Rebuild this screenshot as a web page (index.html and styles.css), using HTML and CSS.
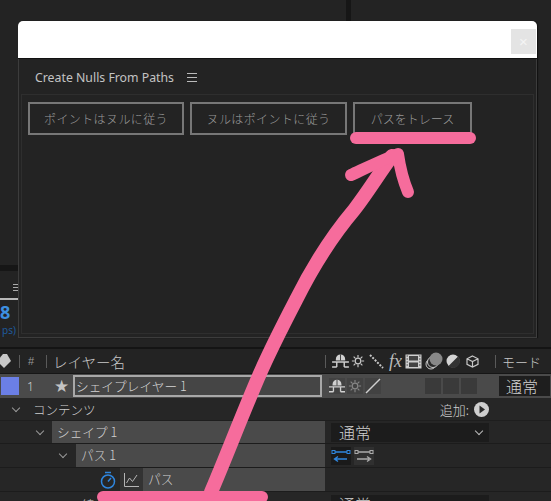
FILE: index.html
```html
<!DOCTYPE html>
<html lang="ja">
<head>
<meta charset="utf-8">
<title>Create Nulls From Paths</title>
<link rel="stylesheet" href="styles.css">
</head>
<body>
<div class="app">
  <svg width="0" height="0" class="defs">
    <symbol id="shy" viewBox="0 0 18 15">
      <path d="M4 7V5.500a5 5 0 0 1 10 0V7z" fill="currentColor"/>
      <path d="M0 8.500h18M0 14h5M13 14h5M5 9v5M13 9v5" stroke="currentColor" stroke-width="1.500" fill="none"/>
      <path d="M9 .5V7" stroke="#3a3a3a" stroke-width="1"/>
    </symbol>
    <symbol id="sun" viewBox="0 0 16 16">
      <circle cx="8" cy="8" r="3.200" fill="none" stroke="currentColor" stroke-width="1.400"/>
      <path d="M8 1v3M8 12v3M1 8h3M12 8h3M3 3l2 2M11 11l2 2M13 3l-2 2M5 11l-2 2" stroke="currentColor" stroke-width="1.300"/>
    </symbol>
  </svg>

  <section class="top-area">
    <div class="divider-v"></div>
    <div class="side-strip">
      <span class="side-menu"></span>
      <span class="side-time">8</span>
      <span class="side-fps">ps)</span>
    </div>
  </section>

  <section class="timeline">
    <div class="head-row">
      <svg class="tag" viewBox="0 0 14 16" width="14" height="16"><path d="M0 8 6 1h4l4 7-7 7z" fill="#c8c8c8"/></svg>
      <span class="sep sep-a"></span>
      <span class="hash">#</span>
      <span class="sep sep-b"></span>
      <span class="head-name">レイヤー名</span>
      <div class="head-icons">
        <span class="sep"></span>
        <svg class="ic-shy"><use href="#shy"/></svg>
        <svg class="ic-sun"><use href="#sun"/></svg>
        <svg class="ic-dots" viewBox="0 0 15 15" width="15" height="15"><path d="M1 1l13 13" stroke="#c8c8c8" stroke-width="2" stroke-dasharray="2 1.400"/></svg>
        <span class="fx">fx</span>
        <svg class="ic-film" viewBox="0 0 17 15" width="17" height="15"><rect x=".5" y=".5" width="16" height="14" fill="#cfcfcf"/><rect x="4" y="2" width="9" height="4.500" fill="#444"/><rect x="4" y="8.500" width="9" height="4.500" fill="#444"/><path d="M1.500 2h1.500M1.500 5h1.500M1.500 8h1.500M1.500 11h1.500M14 2h1.500M14 5h1.500M14 8h1.500M14 11h1.500" stroke="#444"/></svg>
        <svg class="ic-circles" viewBox="0 0 18 18" width="18" height="18"><circle cx="6" cy="12" r="5" fill="none" stroke="#c8c8c8"/><circle cx="8" cy="10" r="5.500" fill="#2a2a2a" stroke="#c8c8c8"/><circle cx="11" cy="7" r="6.500" fill="#888"/></svg>
        <svg class="ic-half" viewBox="0 0 14 14" width="14" height="14"><circle cx="7" cy="7" r="6.500" fill="#d4d4d4"/><path d="M12 2.500A6.500 6.500 0 0 1 2.500 12z" fill="#333"/></svg>
        <svg class="ic-cube" viewBox="0 0 13 13" width="13" height="13"><path d="M6.500 1 12 3.800v5.600L6.500 12 1 9.400V3.800zM1 3.800l5.500 2.700L12 3.800M6.500 6.500V12" fill="none" stroke="#c8c8c8" stroke-width="1.200"/></svg>
        <span class="sep sep-c"></span>
        <span class="head-mode">モード</span>
      </div>
    </div>

    <div class="row layer-row">
      <span class="swatch"></span>
      <span class="num">1</span>
      <span class="star">★</span>
      <span class="layer-name">シェイプレイヤー 1</span>
      <div class="switches">
        <span class="sw"><svg class="ic-shy"><use href="#shy"/></svg></span>
        <span class="sw dim"><svg class="ic-sun"><use href="#sun"/></svg></span>
        <span class="sw"><svg viewBox="0 0 16 16" width="16" height="16"><path d="M1 15 15 1" stroke="#cfcfcf" stroke-width="1.500"/></svg></span>
        <span class="gap"></span>
        <span class="sw blank"></span>
        <span class="sw blank"></span>
        <span class="sw blank"></span>
      </div>
      <span class="mode-box">通常</span>
    </div>

    <div class="row content-row">
      <span class="chev chev-1"></span>
      <span class="label">コンテンツ</span>
      <span class="add">追加:</span>
      <svg class="play" viewBox="0 0 15 15" width="15" height="15"><circle cx="7.500" cy="7.500" r="7.500" fill="#cfcfcf"/><path d="M5.500 3.500 11 7.500l-5.500 4z" fill="#2b2b2b"/></svg>
    </div>

    <div class="row shape-row">
      <span class="chev chev-2"></span>
      <span class="bar bar-shape">シェイプ 1</span>
      <span class="select">通常<i class="select-chev"></i></span>
    </div>

    <div class="row path-row">
      <span class="chev chev-3"></span>
      <span class="bar bar-path">パス 1</span>
      <div class="dirs">
        <svg class="dir on" viewBox="0 0 20 18" width="20" height="18"><path d="M4 5h12M16 12H4M7 9.500 3.500 12 7 14.500" stroke="#2f86de" stroke-width="1.400" fill="none"/><rect x="1" y="3.500" width="3" height="3" fill="none" stroke="#2f86de"/><rect x="16" y="3.500" width="3" height="3" fill="none" stroke="#2f86de"/></svg>
        <svg class="dir" viewBox="0 0 20 18" width="20" height="18"><path d="M4 5h12M3 12h12M13 9.500l3.500 2.500-3.500 2.500" stroke="#aaa" stroke-width="1.400" fill="none"/><rect x="1" y="3.500" width="3" height="3" fill="none" stroke="#aaa"/><rect x="16" y="3.500" width="3" height="3" fill="none" stroke="#aaa"/></svg>
      </div>
    </div>

    <div class="row prop-row">
      <svg class="watch" viewBox="0 0 16 18" width="16" height="18"><circle cx="8" cy="10.500" r="6.500" fill="none" stroke="#2f86de" stroke-width="1.500"/><path d="M5 1.500h6M8 10.500l3-3.500" stroke="#2f86de" stroke-width="1.500"/></svg>
      <span class="graph-cell"><svg viewBox="0 0 15 14" width="15" height="14"><path d="M.5 0v13.500H15M2.500 10l3-5 3 3.500L13 2" stroke="#b5b5b5" fill="none"/></svg></span>
      <span class="bar bar-prop">パス</span>
    </div>

    <div class="row stroke-row">
      <span class="label label-stroke">線</span>
      <span class="select select-last">通常</span>
    </div>
  </section>

  <div class="dialog">
    <header class="dialog-title">
      <button class="close" type="button">×</button>
    </header>
    <div class="dialog-body">
      <div class="panel-tab">
        <span>Create Nulls From Paths</span>
        <span class="burger"></span>
      </div>
      <div class="panel">
        <button class="btn btn-1" type="button">ポイントはヌルに従う</button>
        <button class="btn btn-2" type="button">ヌルはポイントに従う</button>
        <button class="btn btn-3" type="button">パスをトレース</button>
      </div>
    </div>
  </div>

  <svg class="scribble" viewBox="0 0 551 501" width="551" height="501">
    <g fill="none" stroke="#f66c9c" stroke-linecap="round" stroke-linejoin="round">
      <path d="M356 138H470" stroke-width="12"/>
      <path d="M103 497H262" stroke-width="12"/>
      <path d="M211 492C224 462 240 420 258 378C270 350 283 325 296 300C312 268 332 236 354 210C368 192 380 172 392 156" stroke-width="14"/>
      <path d="M351 175C366 168 382 160 398 154C400 168 403 180 408 192" stroke-width="12"/>
    </g>
  </svg>
</div>
</body>
</html>
```

FILE: styles.css
```css
* { box-sizing: border-box; }
html, body { margin: 0; padding: 0; }
body {
  width: 551px;
  height: 501px;
  overflow: hidden;
  background: #232323;
  font-family: "Noto Sans CJK JP", "Noto Sans", sans-serif;
  font-weight: 300;
  color: #c8c8c8;
}
.app { position: relative; width: 551px; height: 501px; overflow: hidden; }
.defs { position: absolute; }

/* background panels under the floating dialog */
.top-area { height: 349px; position: relative; border-bottom: 2px solid #141414; display: flex; }
.divider-v { position: absolute; left: 346px; top: 0; width: 5px; height: 24px; background: #161616; }
.side-strip {
  width: 24px;
  margin-top: 265px;
  border-top: 6px solid #161616;
  display: flex;
  flex-direction: column;
}
.side-menu {
  height: 29px;
  width: 18px;
  border-bottom: 2px solid #b8b8b8;
  background: linear-gradient(#aaa 0 1px, transparent 1px 3px, #aaa 3px 4px, transparent 4px 6px, #aaa 6px 7px, transparent 7px) 13px 13px / 5px 7px no-repeat;
}
.side-time {
  font: 700 18px/24px "Noto Sans", sans-serif;
  color: #3d8fe0;
}
.side-fps {
  font: 10px/13px "Noto Sans", sans-serif;
  color: #1f5a9c;
  padding-left: 2px;
  white-space: nowrap;
}

/* timeline */
.timeline { display: flex; flex-direction: column; }
.head-row {
  height: 25px;
  display: flex;
  align-items: center;
  border-bottom: 1px solid #161616;
}
.tag { margin-left: -3px; }
.sep { display: block; width: 1px; height: 13px; background: #5a5a5a; flex: none; }
.sep-a { margin-left: 8px; }
.hash { margin-left: 8px; width: 10px; font: 11px "Liberation Sans", sans-serif; color: #999; }
.sep-b { margin-left: 8px; }
.head-name { margin-left: 6px; font-size: 14.500px; color: #c8c8c8; }
.head-icons { margin-left: auto; display: flex; align-items: center; width: 226px; flex: none; }
.head-icons .ic-shy { margin-left: 6px; }
.ic-shy { width: 17px; height: 14px; color: #d0d0d0; }
.ic-sun { width: 14px; height: 14px; color: #c8c8c8; margin-left: 2px; }
.ic-dots { margin-left: 4px; }
.fx { margin-left: 5px; width: 14px; font: italic 18px/18px "Liberation Serif", serif; color: #bbb; }
.ic-film { margin-left: 2px; }
.ic-circles { margin-left: 3px; }
.ic-half { margin-left: 3px; }
.ic-cube { margin-left: 6px; }
.sep-c { margin-left: 16px; }
.head-mode { margin-left: 6px; font-size: 13px; color: #c8c8c8; white-space: nowrap; }

.row { display: flex; align-items: center; flex: none; }
.layer-row { height: 24px; background: #4a4a4a; position: relative; }
.swatch { width: 18px; height: 18px; margin-left: 1px; background: #6b7fe6; flex: none; }
.num { margin-left: 8px; width: 27px; font: 300 12px "Noto Sans", sans-serif; color: #d0d0d0; }
.star { width: 20px; font: 17px/1 "DejaVu Sans", sans-serif; color: #c4c4c4; }
.layer-name {
  margin-left: -1px;
  width: 249px;
  height: 22px;
  border: 2px solid #a8a8a8;
  background: #454545;
  padding-left: 1px;
  font-size: 12.700px;
  line-height: 18px;
  color: #d4d4d4;
  flex: none;
}
.switches { display: flex; gap: 2px; margin-left: 7px; width: 170px; flex: none; align-items: center; }
.sw { width: 16px; height: 16px; display: flex; align-items: center; justify-content: center; background: #424242; flex: none; }
.sw.dim .ic-sun { margin: 0; color: #868686; }
.sw.blank { background: #3a3a3a; }
.gap { width: 40px; }
.mode-box { width: 51px; height: 20px; background: #1e1e1e; font-size: 16px; line-height: 20px; padding-left: 7px; color: #d0d0d0; flex: none; }

.content-row { height: 23px; background: #262626; border-bottom: 1px solid #1e1e1e; }
.chev { width: 6px; height: 6px; border-right: 1px solid #999; border-bottom: 1px solid #999; transform: rotate(45deg); flex: none; margin-top: -3px; }
.chev-1 { margin-left: 13px; }
.chev-2 { margin-left: 37px; }
.chev-3 { margin-left: 60px; }
.label { margin-left: 14px; font-size: 12.500px; color: #cfcfcf; }
.add { margin-left: auto; font-size: 13px; color: #cfcfcf; }
.play { margin: 0 62px 0 5px; }

.shape-row { height: 23px; background: #262626; border-bottom: 1px solid #1c1c1c; }
.path-row, .prop-row { height: 24px; background: #262626; border-bottom: 1px solid #1c1c1c; }
.bar { background: #4a4a4a; height: 100%; font-size: 12.700px; line-height: 22px; color: #cfcfcf; flex: none; padding-left: 5px; }
.bar-shape { margin-left: 9px; width: 273px; }
.bar-path { margin-left: 10px; width: 249px; }
.bar-prop { width: 182px; padding-left: 5px; }
.select {
  position: relative;
  margin-left: 6px;
  width: 158px;
  height: 19px;
  background: #1c1c1c;
  font-size: 16px;
  line-height: 19px;
  padding-left: 8px;
  color: #cfcfcf;
  flex: none;
}
.select-chev {
  position: absolute;
  right: 7px;
  top: 5px;
  width: 6px;
  height: 6px;
  border-right: 1px solid #bbb;
  border-bottom: 1px solid #bbb;
  transform: rotate(45deg);
}
.dirs { margin-left: 6px; display: flex; gap: 3px; }
.dir { background: #303030; }
.dir.on { background: #1a1a1a; }
.watch { margin-left: 100px; flex: none; }
.graph-cell { margin-left: 4px; width: 23px; height: 100%; background: #333; display: flex; align-items: center; justify-content: center; flex: none; }
.stroke-row { height: 20px; background: #262626; padding-top: 3px; align-items: flex-start; }
.label-stroke { margin-left: 82px; }
.select-last { margin-left: auto; margin-right: 62px; }

/* floating dialog */
.dialog {
  position: absolute;
  left: 18px;
  top: 21px;
  width: 519px;
  height: 317px;
  display: flex;
  flex-direction: column;
  border-radius: 5px 5px 0 0;
  box-shadow: 1px 0 1px #111;
}
.dialog-title {
  height: 38px;
  background: #fff;
  border-radius: 5px 5px 0 0;
  border-bottom: 1px solid #111;
  display: flex;
  justify-content: flex-end;
  padding: 8px 1px 0 0;
  flex: none;
}
.close {
  width: 25px;
  height: 25px;
  border: 0;
  padding: 0;
  background: #e4e4e4;
  color: #f4f4f4;
  font: 15px/25px "Liberation Sans", sans-serif;
}
.dialog-body {
  flex: 1;
  background: #232323;
  border: 1px solid #3c3c3c;
  border-top: 0;
  padding: 0 2px 3px;
  display: flex;
  flex-direction: column;
  min-height: 0;
}
.panel-tab {
  height: 35px;
  display: flex;
  align-items: center;
  padding: 1px 0 0 14px;
  font: 12.300px "Noto Sans", sans-serif;
  color: #c4c4c4;
  flex: none;
}
.burger {
  width: 10px;
  height: 9px;
  margin-left: 13px;
  border-top: 1px solid #bbb;
  border-bottom: 1px solid #bbb;
  background: linear-gradient(#bbb, #bbb) center / 100% 1px no-repeat;
}
.panel {
  flex: 1;
  border: 1px solid #2e2e2e;
  padding: 7px 6px 0;
  display: flex;
  align-items: flex-start;
  gap: 6px;
}
.btn {
  height: 33px;
  background: transparent;
  border: 2px solid #777;
  color: #9a9a9a;
  font-family: "Noto Sans CJK JP", sans-serif;
  font-weight: 300;
  font-size: 12px;
  letter-spacing: .4px;
  padding: 0;
  flex: none;
}
.btn-1 { width: 156px; }
.btn-2 { width: 157px; }
.btn-3 { width: 119px; letter-spacing: 0; }

/* pink annotation drawn over the screenshot */
.scribble { position: absolute; left: 0; top: 0; pointer-events: none; }
```
